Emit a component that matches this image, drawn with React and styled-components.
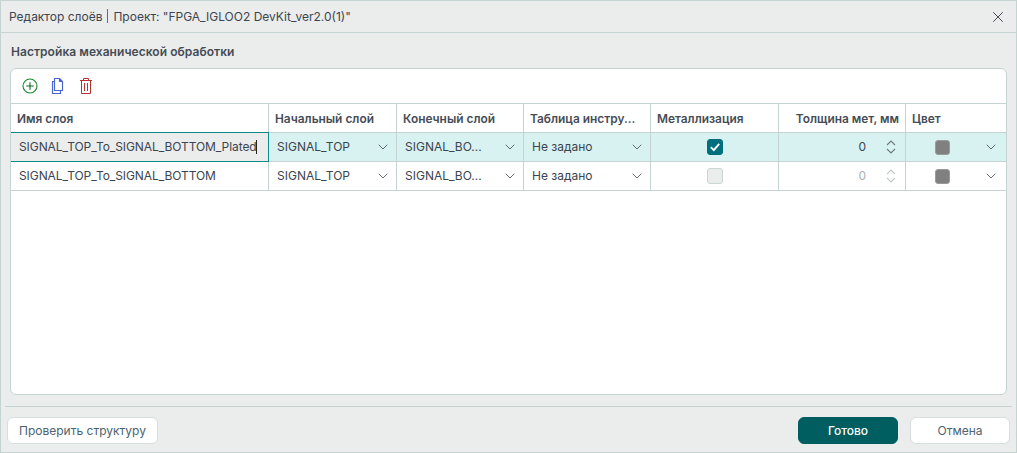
import React from "react";
import styled, { createGlobalStyle } from "styled-components";
import { ChevronDown, X } from "lucide-react";

const Global = createGlobalStyle`
  html, body { margin: 0; padding: 0; background: #ebedec; }
  body { font-family: Inter, "Noto Sans", sans-serif; }
`;

const borderColor = "#c6d3d3";
const textColor = "#3b4450";
const COLS = "258px 128px 127px 127px 128px 127px 1fr";

const Dialog = styled.div`
  width: 1017px; height: 453px; box-sizing: border-box;
  display: flex; flex-direction: column;
  background: #ebedec; border: 1px solid ${borderColor};
  color: ${textColor}; font-size: 12px; overflow: hidden;
`;
const TitleBar = styled.div`
  height: 31px; flex: none; box-sizing: content-box;
  display: flex; align-items: center; justify-content: space-between;
  padding: 0 9px 0 8px; border-bottom: 1px solid ${borderColor};
  font-size: 12px;
`;
const Sep = styled.span`
  display: inline-block; width: 1px; height: 14px; background: #5a7088; margin: 0 5px; vertical-align: -2px;
`;
const Body = styled.div`
  flex: 1; display: flex; flex-direction: column; padding: 0 9px; min-height: 0;
`;
const SectionTitle = styled.div`
  height: 35px; flex: none; box-sizing: border-box; display: flex; align-items: center; padding: 1px 0 0 1px;
  font-weight: 600; font-size: 12px; letter-spacing: .05px; color: #454c55;
`;
const Panel = styled.div`
  height: 327px; box-sizing: border-box; flex: none; background: #fff;
  border: 1px solid ${borderColor}; border-radius: 6px; overflow: hidden;
`;
const Toolbar = styled.div`
  height: 34px; display: flex; align-items: center; gap: 12px; padding-left: 11px;
`;
const IconSlot = styled.span`
  display: flex; width: 16px; height: 18px; align-items: center; justify-content: center;
`;
const Row = styled.div`
  display: grid; grid-template-columns: ${COLS}; height: 29px; box-sizing: border-box;
  border-bottom: 1px solid ${borderColor};
  background: ${p => (p.$selected ? "#d8f2f1" : "#fff")};
`;
const HeadRow = styled(Row)`
  border-top: 1px solid ${borderColor};
  height: 30px;
`;
const Head = styled.div`
  display: flex; align-items: center; box-sizing: border-box; min-width: 0;
  padding: 0 6px; font-weight: 600; font-size: 11.9px; color: #454c55;
  border-right: ${p => (p.$last ? "none" : `1px solid ${borderColor}`)};
  justify-content: ${p => (p.$right ? "flex-end" : "flex-start")};
  white-space: nowrap;
`;
const Cell = styled.div`
  display: flex; align-items: center; box-sizing: border-box; min-width: 0;
  padding: 0 8px; gap: 4px;
  border-right: ${p => (p.$last ? "none" : `1px solid ${borderColor}`)};
  justify-content: ${p => (p.$center ? "center" : "space-between")};
`;
const SelectCell = styled(Cell)`
  padding: 0 5px 0 8px;
`;
const NameCell = styled(Cell)`
  justify-content: flex-start; gap: 0;
  font-size: 12px; letter-spacing: -.08px; white-space: nowrap; padding-bottom: 1px;
  ${p => p.$editing && `
    background: #ebedec;
    margin: -1px 0 -1px 0;
    border: 1px solid #0d8a86;
    border-left: none;
    height: 30px;
  `}
`;
const Caret = styled.span`
  display: inline-block; flex: none; width: 1px; height: 14px; background: #222; margin-left: -1px;
`;
const SelectText = styled.span`
  font-size: 12px; padding-bottom: 1px;
`;
const SelectWrap = styled.div`
  display: flex; align-items: center; justify-content: space-between; flex: 1;
`;
const Box = styled.span`
  width: 16px; height: 16px; box-sizing: border-box; border-radius: 3px;
  display: flex; align-items: center; justify-content: center;
  background: ${p => (p.$checked ? "#02707c" : "#ebedec")};
  border: 1px solid ${p => (p.$checked ? "#02707c" : "#ccd5d5")};
`;
const NumberBox = styled.div`
  display: flex; flex: 1; align-items: center; justify-content: flex-end; gap: 19px;
  color: ${p => (p.$disabled ? "#aab0b3" : textColor)};
`;
const ZeroValue = styled.span`
  padding-bottom: 1px;
`;
const ColorCell = styled(Cell)`
  padding: 0 7px 0 29px;
`;
const Swatch = styled.span`
  width: 15px; height: 15px; border-radius: 3px; background: #808080; border: 1px solid #9a9a9a; box-sizing: border-box;
`;
const Footer = styled.div`
  height: 46px; flex: none; box-sizing: border-box; margin: 11px -5px 0 -5px;
  border-top: 1px solid ${borderColor}; padding: 10px 2px 0 2px;
  display: flex; justify-content: space-between; align-items: flex-start;
`;
const FooterRight = styled.div`
  display: flex; gap: 12px;
`;
const Button = styled.button`
  height: 27px; box-sizing: border-box; border-radius: 6px; font: inherit; font-size: 12px;
  width: ${p => p.$w}px; padding: 0;
  background: ${p => (p.$primary ? "#005e60" : "#fff")};
  color: ${p => (p.$primary ? "#fff" : "#4b6470")};
  font-weight: ${p => (p.$primary ? 500 : 400)};
  border: 1px solid ${p => (p.$primary ? "#005e60" : "#d7dfdf")};
`;

const Chevron = () => <ChevronDown size={16} strokeWidth={1.3} color="#4a5560" />;

const Spinner = ({ color }) => (
  <svg width="12" height="16" viewBox="0 0 12 16" fill="none" stroke={color} strokeWidth="1.1">
    <path d="M2 6 6 2l4 4M2 10l4 4 4-4" />
  </svg>
);

const rows = [
  { name: "SIGNAL_TOP_To_SIGNAL_BOTTOM_Plated", selected: true, checked: true },
  { name: "SIGNAL_TOP_To_SIGNAL_BOTTOM", selected: false, checked: false },
];

const Select = ({ value }) => (
  <SelectWrap>
    <SelectText>{value}</SelectText>
    <Chevron />
  </SelectWrap>
);

export default function App() {
  return (
    <>
      <Global />
      <Dialog>
        <TitleBar>
          <span>Редактор слоёв<Sep />Проект: "FPGA_IGLOO2 DevKit_ver2.0(1)"</span>
          <X size={18} strokeWidth={1.3} color="#3f4a52" />
        </TitleBar>
        <Body>
          <SectionTitle>Настройка механической обработки</SectionTitle>
          <Panel>
            <Toolbar>
              <IconSlot>
                <svg width="16" height="16" viewBox="0 0 16 16" fill="none" stroke="#158a2a" strokeWidth="1.1">
                  <circle cx="8" cy="8" r="7" />
                  <path d="M8 4.3v7.4M4.3 8h7.4" stroke="#0d6b1f" />
                </svg>
              </IconSlot>
              <IconSlot>
                <svg width="14" height="16" viewBox="0 0 14 16" fill="none" stroke="#4a66d0" strokeWidth="1.2">
                  <path d="M3.5.5h5l3 3v9h-8zM8.5.5v3h3" />
                  <path d="M3.5 3.5h-2v12h8v-3" />
                </svg>
              </IconSlot>
              <IconSlot>
                <svg width="12" height="16" viewBox="0 0 12 16" fill="none" stroke="#b83232" strokeWidth="1">
                  <path d="M0 2.5h12M3.5 2.5v-2h5v2M1.5 2.5v13h9v-13M4.5 5v8M7.5 5v8" />
                </svg>
              </IconSlot>
            </Toolbar>
            <HeadRow>
              <Head>Имя слоя</Head>
              <Head>Начальный слой</Head>
              <Head>Конечный слой</Head>
              <Head>Таблица инстру...</Head>
              <Head>Металлизация</Head>
              <Head $right>Толщина мет, мм</Head>
              <Head $last>Цвет</Head>
            </HeadRow>
            {rows.map((r) => (
              <Row key={r.name} $selected={r.selected}>
                <NameCell $editing={r.selected}>
                  <span>{r.name}</span>
                  {r.selected && <Caret />}
                </NameCell>
                <SelectCell><Select value="SIGNAL_TOP" /></SelectCell>
                <SelectCell><Select value="SIGNAL_BO..." /></SelectCell>
                <SelectCell><Select value="Не задано" /></SelectCell>
                <Cell $center>
                  <Box $checked={r.checked}>
                    {r.checked && (
                      <svg width="12" height="12" viewBox="0 0 12 12" fill="none" stroke="#fff" strokeWidth="1.8">
                        <path d="M1.8 6.2 4.8 9.2 10.2 2.8" />
                      </svg>
                    )}
                  </Box>
                </Cell>
                <Cell>
                  <NumberBox $disabled={!r.checked}>
                    <ZeroValue>0</ZeroValue>
                    <Spinner color={r.checked ? "#6f7a80" : "#c3c9cb"} />
                  </NumberBox>
                </Cell>
                <ColorCell $last>
                  <Swatch />
                  <Chevron />
                </ColorCell>
              </Row>
            ))}
          </Panel>
          <Footer>
            <Button $w={151}>Проверить структуру</Button>
            <FooterRight>
              <Button $primary $w={100}>Готово</Button>
              <Button $w={100}>Отмена</Button>
            </FooterRight>
          </Footer>
        </Body>
      </Dialog>
    </>
  );
}
